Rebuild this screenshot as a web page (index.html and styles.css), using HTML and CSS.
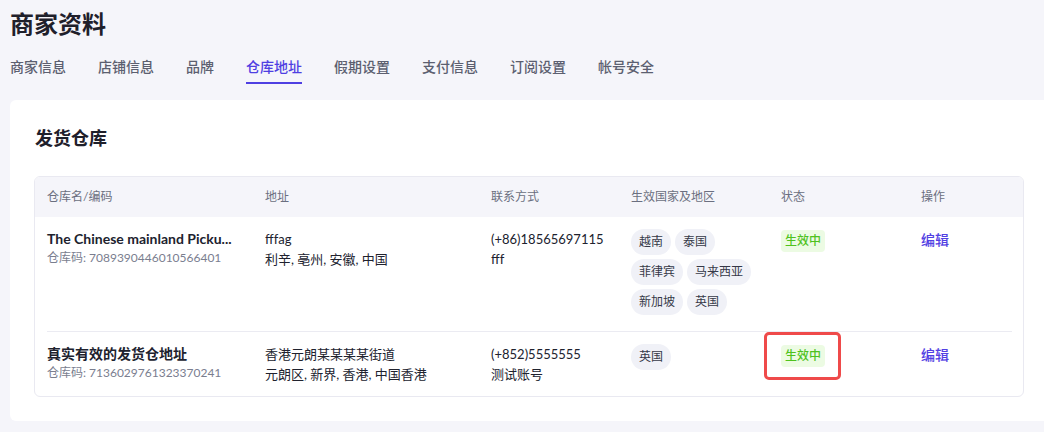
FILE: index.html
```html
<!DOCTYPE html>
<html lang="zh-CN">
<head>
<meta charset="utf-8">
<title>商家资料</title>
<link rel="stylesheet" href="styles.css">
</head>
<body>
<div class="page">
  <header class="page-head">
    <h1 class="page-title">商家资料</h1>
    <nav class="tabs">
      <span class="tab">商家信息</span>
      <span class="tab">店铺信息</span>
      <span class="tab">品牌</span>
      <span class="tab tab-active">仓库地址</span>
      <span class="tab">假期设置</span>
      <span class="tab">支付信息</span>
      <span class="tab">订阅设置</span>
      <span class="tab">帐号安全</span>
    </nav>
  </header>
  <section class="card">
    <h2 class="card-title">发货仓库</h2>
    <div class="table">
      <div class="row head">
        <div class="cell">仓库名/编码</div>
        <div class="cell">地址</div>
        <div class="cell">联系方式</div>
        <div class="cell">生效国家及地区</div>
        <div class="cell">状态</div>
        <div class="cell">操作</div>
      </div>
      <div class="row body-row">
        <div class="cell">
          <div class="name">The Chinese mainland Picku...</div>
          <div class="code">仓库码: 7089390446010566401</div>
        </div>
        <div class="cell">
          <div class="line">fffag</div>
          <div class="line">利辛, 亳州, 安徽, 中国</div>
        </div>
        <div class="cell">
          <div class="line">(+86)18565697115</div>
          <div class="line">fff</div>
        </div>
        <div class="cell">
          <div class="tags">
            <span class="tag">越南</span>
            <span class="tag">泰国</span>
            <span class="tag">菲律宾</span>
            <span class="tag">马来西亚</span>
            <span class="tag">新加坡</span>
            <span class="tag">英国</span>
          </div>
        </div>
        <div class="cell">
          <span class="badge">生效中</span>
        </div>
        <div class="cell">
          <span class="link">编辑</span>
        </div>
      </div>
      <div class="divider"></div>
      <div class="row body-row">
        <div class="cell">
          <div class="name">真实有效的发货仓地址</div>
          <div class="code">仓库码: 7136029761323370241</div>
        </div>
        <div class="cell">
          <div class="line">香港元朗某某某某街道</div>
          <div class="line">元朗区, 新界, 香港, 中国香港</div>
        </div>
        <div class="cell">
          <div class="line">(+852)5555555</div>
          <div class="line">测试账号</div>
        </div>
        <div class="cell">
          <div class="tags">
            <span class="tag">英国</span>
          </div>
        </div>
        <div class="cell">
          <span class="badge highlighted">生效中</span>
        </div>
        <div class="cell">
          <span class="link">编辑</span>
        </div>
      </div>
    </div>
  </section>
</div>
</body>
</html>
```

FILE: styles.css
```css
html, body {
  margin: 0;
  padding: 0;
  overflow: hidden;
  background: #f5f5fa;
}

body {
  font-family: Lato, "Noto Sans CJK SC", sans-serif;
  color: #20222e;
  width: 1044px;
  height: 432px;
}

.page {
  padding: 8px 0 0 10px;
}

.page-head {
  display: flex;
  flex-direction: column;
}

.page-title {
  margin: 0;
  font-size: 24px;
  line-height: 32px;
  font-weight: 700;
  color: #1f202b;
}

.tabs {
  display: flex;
  gap: 32px;
  margin-top: 16px;
}

.tab {
  font-size: 14px;
  line-height: 22px;
  font-weight: 500;
  color: #5c5f70;
  padding-bottom: 4px;
  border-bottom: 2px solid transparent;
}

.tab-active {
  color: #4f3fe2;
  border-bottom-color: #4f3fe2;
}

.card {
  margin-top: 16px;
  margin-right: -12px;
  background: #ffffff;
  border-radius: 6px;
  padding: 24px;
}

.card-title {
  margin: 0 0 24px 1px;
  font-size: 18px;
  line-height: 28px;
  font-weight: 700;
  color: #1f202b;
}

.table {
  width: 988px;
  border: 1px solid #e9e9f1;
  border-radius: 6px;
  overflow: hidden;
}

.row {
  display: grid;
  grid-template-columns: 218px 226px 140px 150px 140px 1fr;
}

.cell {
  padding: 0 12px;
  min-width: 0;
}

.head {
  background: #f5f5fa;
  height: 40px;
  align-items: center;
}

.head .cell {
  font-size: 12px;
  line-height: 40px;
  color: #6b6f80;
}

.body-row {
  padding: 12px 0;
  align-items: start;
}

.name {
  font-size: 14px;
  line-height: 20px;
  font-weight: 700;
  color: #20222e;
  white-space: nowrap;
}

.code {
  font-size: 12px;
  line-height: 18px;
  color: #7a7e8f;
  white-space: nowrap;
}

.line {
  font-size: 13px;
  line-height: 20px;
  color: #20222e;
  white-space: nowrap;
}

.tags {
  display: flex;
  flex-wrap: wrap;
  column-gap: 4px;
}

.tag {
  display: inline-block;
  height: 26px;
  line-height: 26px;
  padding: 0 8px;
  border-radius: 13px;
  background: #f0f1f7;
  color: #363948;
  font-size: 12px;
  margin-bottom: 4px;
}

.badge {
  display: inline-block;
  position: relative;
  height: 22px;
  line-height: 22px;
  padding: 0 4px;
  border-radius: 4px;
  background: #ecfbe3;
  color: #4fc21d;
  font-size: 12px;
  font-weight: 500;
}

.highlighted::after {
  content: "";
  position: absolute;
  top: -13px;
  left: -17px;
  width: 71px;
  height: 42px;
  border: 3px solid #ef4a4a;
  border-radius: 5px;
}

.link {
  font-size: 14px;
  line-height: 20px;
  font-weight: 500;
  color: #5240e3;
}

.divider {
  height: 1px;
  background: #ebebf2;
  margin: 0 11px 0 12px;
}
```
